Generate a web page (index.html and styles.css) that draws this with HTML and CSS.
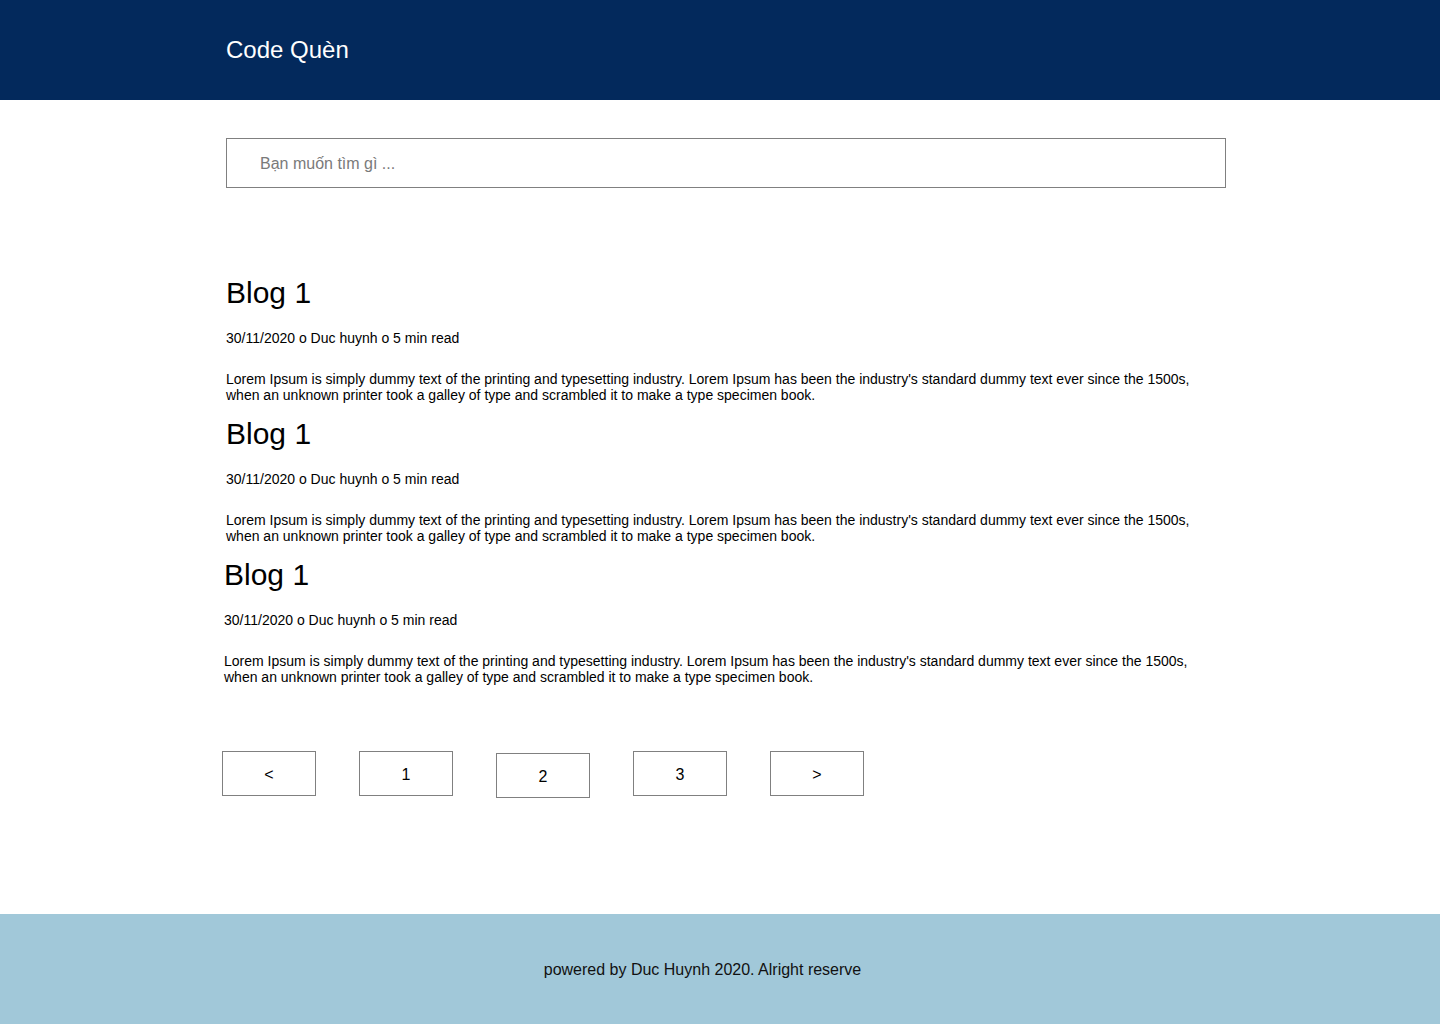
FILE: index.html
```html
<!DOCTYPE html>
<html lang="vi">
<head>
<meta charset="utf-8">
<title>Code Quèn</title>
<link rel="stylesheet" href="styles.css">
</head>
<body>
<header class="site-header">
  <div class="brand">Code Quèn</div>
</header>
<main class="content">
  <input class="search" type="text" placeholder="Bạn muốn tìm gì ...">
  <section class="posts">
    <article class="post">
      <h2 class="post-title">Blog 1</h2>
      <div class="post-meta">30/11/2020 o Duc huynh o 5 min read</div>
      <p class="post-body">Lorem Ipsum is simply dummy text of the printing and typesetting industry. Lorem Ipsum has been the industry's standard dummy text ever since the 1500s, when an unknown printer took a galley of type and scrambled it to make a type specimen book.</p>
    </article>
    <article class="post">
      <h2 class="post-title">Blog 1</h2>
      <div class="post-meta">30/11/2020 o Duc huynh o 5 min read</div>
      <p class="post-body">Lorem Ipsum is simply dummy text of the printing and typesetting industry. Lorem Ipsum has been the industry's standard dummy text ever since the 1500s, when an unknown printer took a galley of type and scrambled it to make a type specimen book.</p>
    </article>
    <article class="post post-shift">
      <h2 class="post-title">Blog 1</h2>
      <div class="post-meta">30/11/2020 o Duc huynh o 5 min read</div>
      <p class="post-body">Lorem Ipsum is simply dummy text of the printing and typesetting industry. Lorem Ipsum has been the industry's standard dummy text ever since the 1500s, when an unknown printer took a galley of type and scrambled it to make a type specimen book.</p>
    </article>
  </section>
  <nav class="pagination">
    <div class="page">&lt;</div>
    <div class="page">1</div>
    <div class="page page-low">2</div>
    <div class="page">3</div>
    <div class="page">&gt;</div>
  </nav>
</main>
<footer class="site-footer">
  <div class="footer-text">powered by Duc Huynh 2020. Alright reserve</div>
</footer>
</body>
</html>
```
FILE: styles.css
```css
html, body {
  margin: 0;
  padding: 0;
  background: #ffffff;
  font-family: "Liberation Sans", Arial, sans-serif;
  color: #000000;
}

.site-header {
  height: 100px;
  background: #03295c;
  display: flex;
  align-items: center;
  padding-left: 226px;
}

.brand {
  color: #ffffff;
  font-size: 24px;
  line-height: 28px;
}

.content {
  padding: 38px 0 0 226px;
}

.search {
  display: block;
  box-sizing: border-box;
  width: 1000px;
  height: 50px;
  margin: 0;
  border: 1px solid #808080;
  padding: 2px 0 0 33px;
  font-family: "Liberation Sans", Arial, sans-serif;
  font-size: 16px;
  color: #333333;
  background: #ffffff;
  outline: none;
}

.search::placeholder {
  color: #7a7a7a;
}

.posts {
  margin-top: 88px;
  width: 1000px;
  display: flex;
  flex-direction: column;
  gap: 14px;
}

.post-shift {
  margin-left: -2px;
  margin-right: 2px;
}

.post-title {
  margin: 0;
  font-size: 30px;
  line-height: 34px;
  font-weight: normal;
}

.post-meta {
  margin-top: 20px;
  font-size: 14px;
  line-height: 16px;
}

.post-body {
  margin: 25px 0 0;
  font-size: 14px;
  line-height: 16px;
}

.pagination {
  margin: 66px 0 0 -4px;
  display: flex;
  align-items: flex-start;
  gap: 43px;
}

.page {
  box-sizing: border-box;
  width: 94px;
  height: 45px;
  padding-top: 2px;
  border: 1px solid #808080;
  display: flex;
  align-items: center;
  justify-content: center;
  font-size: 16px;
}

.page-low {
  margin-top: 2px;
  margin-bottom: -2px;
}

.site-footer {
  margin-top: 118px;
  height: 110px;
  box-sizing: border-box;
  padding: 2px 35px 0 0;
  background: #a1c8d9;
  display: flex;
  align-items: center;
  justify-content: center;
}

.footer-text {
  font-size: 16px;
  line-height: 18px;
  color: #111111;
}
```
